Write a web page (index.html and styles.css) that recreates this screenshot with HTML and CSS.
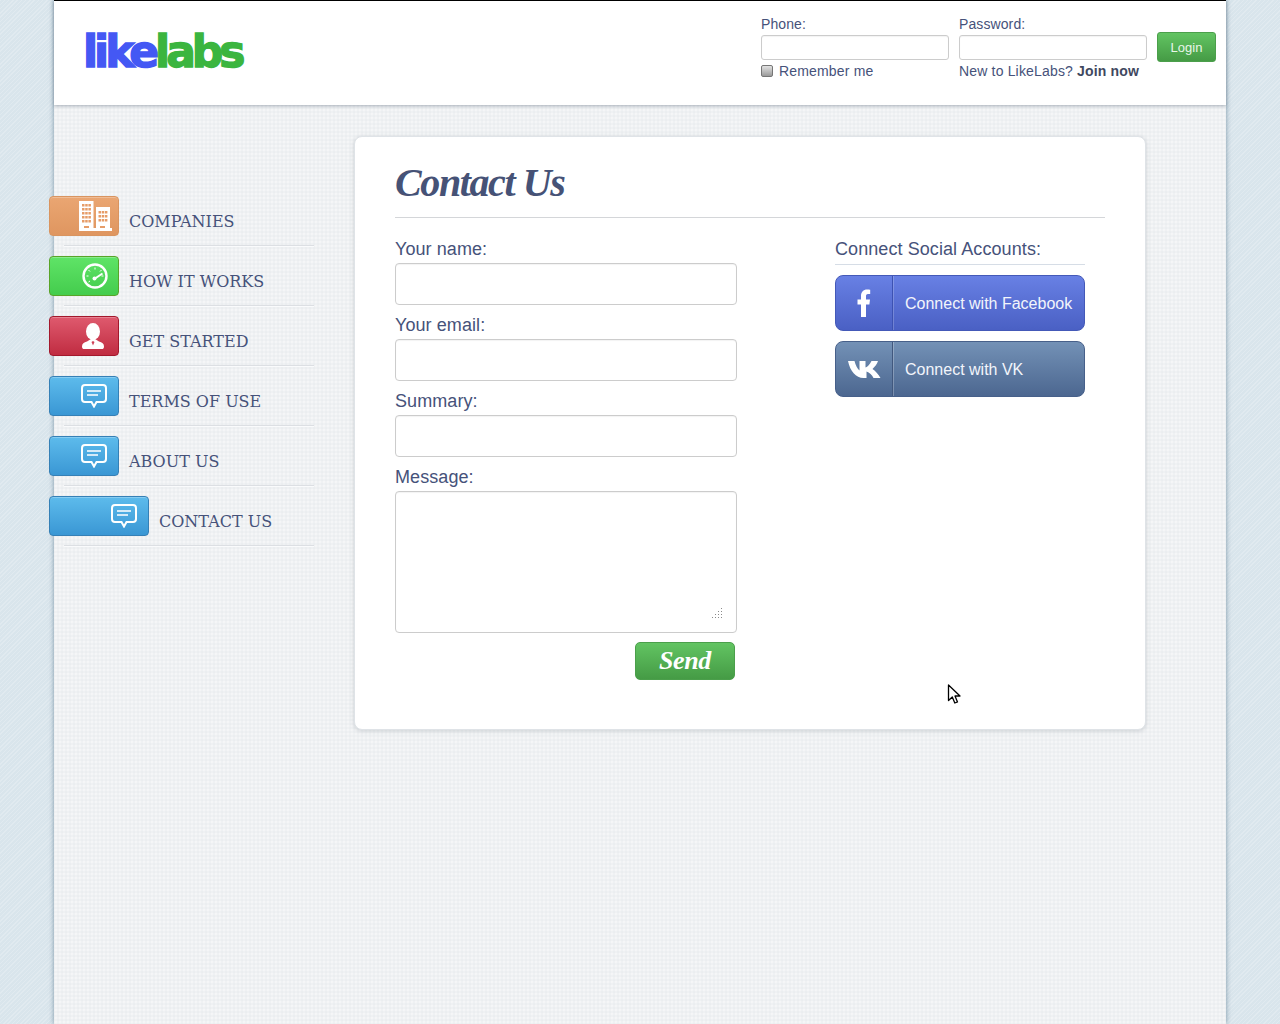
FILE: index.html
```html
<!DOCTYPE html>
<html lang="en">
<head>
<meta charset="utf-8">
<title>LikeLabs - Contact Us</title>
<link rel="stylesheet" href="styles.css">
</head>
<body>
<svg class="defs" width="0" height="0">
  <defs>
    <symbol id="bubble" viewBox="0 0 26 24">
      <path d="M4 1h18a3 3 0 0 1 3 3v11a3 3 0 0 1-3 3h-6.500l-2.500 4.500-2.500-4.500H4a3 3 0 0 1-3-3V4a3 3 0 0 1 3-3z" fill="none" stroke="#fff" stroke-width="2"/>
      <path d="M6 7h14M6 11h11" stroke="#fff" stroke-width="1.600"/>
    </symbol>
  </defs>
</svg>
<div class="page">
  <header class="top">
    <a class="logo" href="#"><span class="logo-like">like</span><span class="logo-labs">labs</span></a>
    <form class="login">
      <div class="login-col">
        <label class="login-label">Phone:</label>
        <input class="login-input" type="text">
        <label class="login-note"><input class="check" type="checkbox">Remember me</label>
      </div>
      <div class="login-col">
        <label class="login-label">Password:</label>
        <input class="login-input" type="password">
        <span class="login-note">New to LikeLabs? <b>Join now</b></span>
      </div>
      <button class="login-btn" type="button">Login</button>
    </form>
  </header>
  <div class="content">
    <nav class="side">
      <a class="nav-item" href="#">
        <span class="tab tab-orange">
          <svg width="33" height="30" viewBox="0 0 33 30"><path fill="#fff" d="M0 0h14.500v27H0zM17 6h14v21H17zM0 27h33v3H0z"/><g fill="#e69c68"><path d="M3 3h2.500v2.500H3zM6.200 3h2.500v2.500H6.200zM9.400 3h2.500v2.500H9.400zM3 7h2.500v2.500H3zM6.200 7h2.500v2.500H6.200zM9.400 7h2.500v2.500H9.400zM3 11h2.500v2.500H3zM6.200 11h2.500v2.500H6.200zM9.400 11h2.500v2.500H9.400zM3 15h2.500v2.500H3zM6.200 15h2.500v2.500H6.200zM9.400 15h2.500v2.500H9.400zM3 19h2.500v2.500H3zM6.200 19h2.500v2.500H6.200zM9.400 19h2.500v2.500H9.400zM5 25h5v2H5zM21 25h5v2h-5zM19.500 10h2.500v2.500h-2.500zM22.700 10h2.500v2.500h-2.500zM25.900 10h2.500v2.500h-2.500zM19.500 14h2.500v2.500h-2.500zM22.700 14h2.500v2.500h-2.500zM25.900 14h2.500v2.500h-2.500zM19.500 18h2.500v2.500h-2.500zM22.700 18h2.500v2.500h-2.500zM25.900 18h2.500v2.500h-2.500z"/></g></svg>
        </span>
        <span class="nav-text">COMPANIES</span>
      </a>
      <a class="nav-item" href="#">
        <span class="tab tab-green">
          <svg width="26" height="26" viewBox="0 0 26 26"><circle cx="13" cy="13" r="11.500" fill="none" stroke="#fff" stroke-width="2.400"/><path d="M13 15.500L20.500 10.500" stroke="#fff" stroke-width="2"/><circle cx="12.500" cy="15.500" r="2" fill="#fff"/><path d="M13 4.500v2M6.500 7l1.500 1.500M4.500 13h2M6.500 19l1.500-1M19.500 7L18 8.500M21.500 13h-2" stroke="#fff" stroke-width="1"/></svg>
        </span>
        <span class="nav-text">HOW IT WORKS</span>
      </a>
      <a class="nav-item" href="#">
        <span class="tab tab-red">
          <svg width="22" height="26" viewBox="0 0 22 26"><ellipse cx="11" cy="8.500" rx="7" ry="8.500" fill="#fff"/><path fill="#fff" d="M0 23.500c0-3 2-4 5-5l4-2.500h4l4 2.500c3 1 5 2 5 5 0 2-1 2.500-2 2.500H2c-1 0-2-.5-2-2.500z"/><path fill="#cf4257" d="M11 18l-1.500 1 1.500 3.500 1.500-3.500z"/></svg>
        </span>
        <span class="nav-text">GET STARTED</span>
      </a>
      <a class="nav-item" href="#">
        <span class="tab tab-blue"><svg class="bubble" width="26" height="24"><use href="#bubble"/></svg></span>
        <span class="nav-text">TERMS OF USE</span>
      </a>
      <a class="nav-item" href="#">
        <span class="tab tab-blue"><svg class="bubble" width="26" height="24"><use href="#bubble"/></svg></span>
        <span class="nav-text">ABOUT US</span>
      </a>
      <a class="nav-item" href="#">
        <span class="tab tab-blue tab-active"><svg class="bubble" width="26" height="24"><use href="#bubble"/></svg></span>
        <span class="nav-text">CONTACT US</span>
      </a>
    </nav>
    <main class="card">
      <h1 class="title">Contact Us</h1>
      <div class="columns">
        <form class="form">
          <label class="field-label">Your name:</label>
          <input class="field" type="text">
          <label class="field-label">Your email:</label>
          <input class="field" type="text">
          <label class="field-label">Summary:</label>
          <input class="field" type="text">
          <label class="field-label">Message:</label>
          <div class="area-wrap">
            <textarea class="field area"></textarea>
            <svg class="grip" width="11" height="11" viewBox="0 0 11 11"><path fill="#8a8a8a" d="M9 0h1v1H9zM6 3h1v1H6zM9 3h1v1H9zM3 6h1v1H3zM6 6h1v1H6zM9 6h1v1H9zM0 9h1v1H0zM3 9h1v1H3zM6 9h1v1H6zM9 9h1v1H9z"/></svg>
          </div>
          <button class="send" type="button">Send</button>
        </form>
        <aside class="social">
          <h2 class="social-title">Connect Social Accounts:</h2>
          <a class="social-btn fb" href="#">
            <span class="social-icon"><svg width="14" height="28" viewBox="0 0 14 28"><path fill="#fff" d="M4 28V15.500H0.500V10.500H4V7C4 3 6.500 0.500 10 0.500c1.500 0 2.800.1 3.200.2V5h-2.200C9.300 5 9 6 9 7.200v3.300h4l-.6 5H9V28z"/></svg></span>
            <span class="social-text">Connect with Facebook</span>
          </a>
          <a class="social-btn vk" href="#">
            <span class="social-icon"><svg width="33" height="18" viewBox="0 0 33 18"><path fill="#fff" d="M0 1h6.500c1 4 3 8 5 9.500V1h6v6.500C19.500 7 22 4 23.500 1H30c-.8 3-3.500 6-5.500 8 2.500 1.800 6 5 8 9h-7c-1.500-3-4-5.500-7-6.500V18h-3C8 18 2 11 0 1z"/></svg></span>
            <span class="social-text">Connect with VK</span>
          </a>
        </aside>
      </div>
    </main>
  </div>
</div>
<svg class="cursor" width="14" height="21" viewBox="0 0 14 21"><path d="M1.500 1v15.500l3.800-3.500 2.500 6 2.700-1.100-2.500-5.900h5z" fill="#fff" stroke="#000" stroke-width="1.300" stroke-linejoin="round"/></svg>
</body>
</html>
```
FILE: styles.css
```css
* { box-sizing: border-box; }
html, body { height: 100%; }
body {
  margin: 0;
  overflow: hidden;
  font-family: "Liberation Sans", Arial, sans-serif;
  color: #46527a;
  background-color: #d9e5ec;
  background-image: repeating-linear-gradient(135deg, rgba(255,255,255,.2) 0 1px, transparent 1px 3px);
}
a { color: inherit; text-decoration: none; }
.defs { position: absolute; }

.page {
  width: 1172px;
  min-height: 100%;
  margin: 0 auto;
  background-color: #eff1f3;
  background-image: radial-gradient(rgba(255,255,255,.4) .7px, transparent .8px), radial-gradient(rgba(215,220,225,.2) .7px, transparent .8px);
  background-size: 4px 4px;
  background-position: 0 0, 2px 2px;
  box-shadow: 0 0 5px rgba(90,120,140,.75);
}

/* Header */
.top {
  height: 105px;
  background: #fff;
  border-top: 1px solid #000;
  box-shadow: 0 1px 3px rgba(110,125,140,.6);
  display: flex;
  justify-content: space-between;
  padding: 0 10px 0 29px;
}
.logo {
  display: block;
  margin-top: 25px;
  font-family: "DejaVu Sans", sans-serif;
  font-weight: 700;
  font-size: 44px;
  line-height: 52px;
  letter-spacing: -4px;
  -webkit-text-stroke: 1.400px currentColor;
}
.logo-like { color: #4458f4; }
.logo-labs { color: #3bb53f; }
.login { display: flex; padding-top: 15px; }
.login-col { width: 188px; margin-right: 10px; display: flex; flex-direction: column; }
.login-label { font-size: 14px; line-height: 16px; height: 19px; letter-spacing: .1px; }
.login-input {
  width: 188px;
  height: 25px;
  background: #fff;
  border: 1px solid #ccc;
  border-radius: 3px;
  box-shadow: inset 0 1px 1px rgba(0,0,0,.05);
}
.login-note { display: block; font-size: 14px; line-height: 16px; margin-top: 3px; white-space: pre; letter-spacing: .17px; }
.login-note b { color: #3f4860; }
.check {
  appearance: none;
  width: 12px;
  height: 12px;
  margin: 0 6px 0 0;
  vertical-align: -1px;
  background: linear-gradient(#e2e2e2, #9a9a9a);
  border: 1px solid #767676;
  border-radius: 2px;
}
.login-btn {
  width: 59px;
  height: 30px;
  margin-top: 16px;
  padding: 0;
  font: 13px "Liberation Sans", Arial, sans-serif;
  color: #e8f6e8;
  background: linear-gradient(#62c462, #459b45);
  border: 1px solid #4b9f4b;
  border-radius: 3px;
}

/* Layout */
.content { display: flex; align-items: flex-start; }
.side { width: 305px; margin-left: -5px; padding-top: 91px; flex: none; }
.nav-item { display: flex; height: 60px; position: relative; }
.nav-item::after {
  content: "";
  position: absolute;
  left: 15px;
  right: 40px;
  bottom: 10px;
  height: 1px;
  background: #dcdfe3;
  box-shadow: 0 1px 0 #fafbfc;
}
.tab {
  width: 70px;
  height: 40px;
  flex: none;
  display: flex;
  align-items: center;
  justify-content: flex-end;
  padding-right: 6px;
  border-radius: 4px;
  border: 1px solid;
  box-shadow: inset 0 1px 0 rgba(255,255,255,.25);
}
.tab-orange { background: linear-gradient(#eaa672, #df9660); border-color: #d9945f; }
.tab-green { background: linear-gradient(#5fe467, #44cc4d); border-color: #58a428; padding-right: 10px; }
.tab-red { background: linear-gradient(#df5a6e, #c02c41); border-color: #a3182c; padding-right: 14px; }
.tab-blue { background: linear-gradient(#5dbbec, #3a97d4); border-color: #3580b6; padding-right: 11px; }
.tab-active { width: 100px; }
.nav-text {
  font-family: "DejaVu Serif", "Liberation Serif", serif;
  font-size: 16px;
  line-height: 20px;
  margin: 16px 0 0 10px;
  white-space: nowrap;
}

/* Card */
.card {
  width: 792px;
  height: 594px;
  margin: 31px 0 0 0;
  padding: 0 40px;
  background: #fff;
  border: 1px solid #dfe3e7;
  border-radius: 8px;
  box-shadow: 0 1px 4px rgba(120,130,140,.3);
}
.title {
  margin: 0;
  height: 81px;
  padding-top: 22px;
  border-bottom: 1px solid #d4d6d9;
  font-family: "Liberation Serif", serif;
  font-style: italic;
  font-weight: 700;
  font-size: 40px;
  line-height: 48px;
  letter-spacing: -1.400px;
  color: #465276;
}
.columns { display: flex; justify-content: space-between; padding-top: 20px; padding-right: 20px; }
.form { width: 342px; display: flex; flex-direction: column; }
.field-label { font-size: 18px; line-height: 22px; height: 25px; letter-spacing: .08px; }
.field {
  display: block;
  width: 342px;
  height: 42px;
  margin-bottom: 9px;
  background: #fff;
  border: 1px solid #ccc;
  border-radius: 4px;
  box-shadow: inset 0 1px 1px rgba(0,0,0,.05);
}
.area-wrap { position: relative; }
.area { height: 142px; resize: none; }
.grip { position: absolute; left: 317px; bottom: 23px; }
.send {
  width: 100px;
  height: 38px;
  margin-left: 240px;
  padding: 0;
  font-family: "Liberation Serif", serif;
  font-style: italic;
  font-weight: 700;
  font-size: 26px;
  letter-spacing: -.4px;
  color: #fff;
  background: linear-gradient(#62c462, #459b45);
  border: 1px solid #4b9f4b;
  border-radius: 5px;
}
.social { width: 250px; }
.social-title {
  margin: 0 0 10px;
  height: 27px;
  font-size: 18px;
  line-height: 22px;
  font-weight: 400;
  letter-spacing: .08px;
  border-bottom: 1px solid #d6dde6;
}
.social-btn {
  display: flex;
  height: 56px;
  margin-bottom: 10px;
  border-radius: 8px;
  border: 1px solid;
  color: #f2f5fb;
  font-size: 16px;
  line-height: 55px;
  overflow: hidden;
}
.fb { background: linear-gradient(#6880e4, #4a60c4); border-color: #4459b8; }
.vk { background: linear-gradient(#7391b6, #4c6790); border-color: #47608a; }
.social-icon {
  width: 57px;
  flex: none;
  display: flex;
  align-items: center;
  justify-content: center;
  border-right: 1px solid;
}
.fb .social-icon { border-color: #3d52b2; box-shadow: 1px 0 0 rgba(255,255,255,.2); }
.vk .social-icon { border-color: #41587e; box-shadow: 1px 0 0 rgba(255,255,255,.25); }
.social-text { padding-left: 12px; white-space: nowrap; }

.cursor { position: absolute; left: 947px; top: 684px; }
```
